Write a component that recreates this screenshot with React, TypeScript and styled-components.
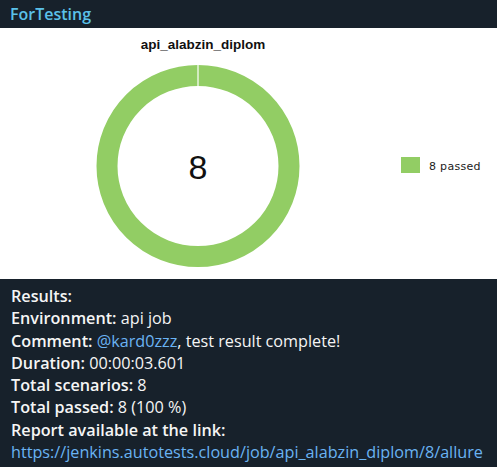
import React from "react";
import styled, { createGlobalStyle } from "styled-components";

const Global = createGlobalStyle`
  html, body { margin: 0; padding: 0; background: #17212b; }
  body { font-family: "Open Sans", "Noto Sans", sans-serif; }
`;

const Page = styled.div`
  width: 497px;
  height: 467px;
  background: #17212b;
  display: flex;
  flex-direction: column;
  overflow: hidden;
`;

const Header = styled.div`
  height: 28px;
  display: flex;
  align-items: center;
  padding: 0 10px;
  color: #5bc1e9;
  font-size: 16px;
  font-weight: 600;
  box-sizing: border-box;
`;

const ChartBox = styled.div`
  height: 251px;
  background: #ffffff;
  flex-shrink: 0;
`;

const Body = styled.div`
  padding: 6px 11px 0;
  color: #f5f5f5;
  font-size: 16.2px;
  line-height: 22.3px;
`;

const Line = styled.div`
  white-space: nowrap;
`;

const Label = styled.span`
  font-weight: 600;
`;

const Link = styled.span`
  color: #6ab3f3;
`;

const GREEN = "#92cd64";

function Chart() {
  const cx = 198;
  const cy = 138;
  return (
    <svg width="497" height="251" viewBox="0 0 497 251">
      <text
        x="203"
        y="21"
        textAnchor="middle"
        fontFamily="'Liberation Sans', Arial, sans-serif"
        fontWeight="700"
        fontSize="13.5"
        fill="#111"
      >
        api_alabzin_diplom
      </text>
      <ellipse cx={cx} cy={cy} rx={91} ry={90.5} fill="none" stroke={GREEN} strokeWidth={21} />
      <line x1={cx} y1={cy - 102} x2={cx} y2={cy - 79} stroke="#fff" strokeWidth={1.2} />
      <text
        x={cx}
        y={cy + 12.5}
        textAnchor="middle"
        fontFamily="'Liberation Sans', Arial, sans-serif"
        fontSize="34"
        fill="#111"
      >
        8
      </text>
      <rect x="401" y="129" width="19" height="16" fill={GREEN} />
      <text
        x="429"
        y="142"
        fontFamily="'DejaVu Sans', sans-serif"
        fontSize="11"
        letterSpacing="0.3"
        fill="#222"
      >
        8 passed
      </text>
    </svg>
  );
}

export default function App() {
  return (
    <>
      <Global />
      <Page>
        <Header>ForTesting</Header>
        <ChartBox>
          <Chart />
        </ChartBox>
        <Body>
          <Line><Label>Results:</Label></Line>
          <Line><Label>Environment:</Label> api job</Line>
          <Line><Label>Comment:</Label> <Link>@kard0zzz</Link>, test result complete!</Line>
          <Line><Label>Duration:</Label> 00:00:03.601</Line>
          <Line><Label>Total scenarios:</Label> 8</Line>
          <Line><Label>Total passed:</Label> 8 (100 %)</Line>
          <Line><Label>Report available at the link:</Label></Line>
          <Line><Link>https://jenkins.autotests.cloud/job/api_alabzin_diplom/8/allure</Link></Line>
        </Body>
      </Page>
    </>
  );
}
